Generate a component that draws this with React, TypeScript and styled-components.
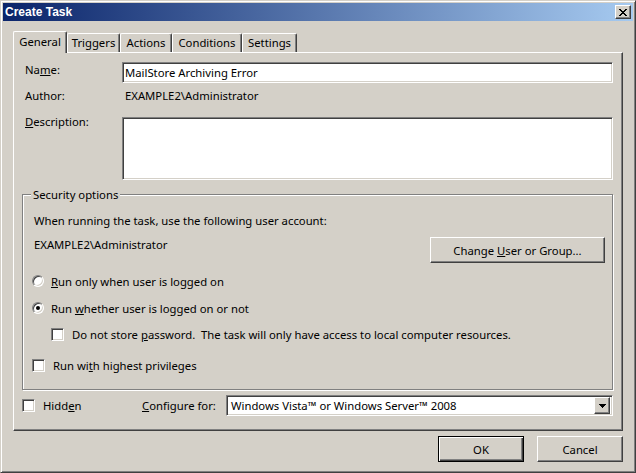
import React from 'react';
import styled, { createGlobalStyle, css } from 'styled-components';

const face = '#d4d0c8';
const shadow = '#808080';
const dark = '#404040';

const GlobalStyle = createGlobalStyle`
  html, body {
    margin: 0;
    padding: 0;
    background: ${face};
  }
  body {
    font-family: 'Noto Sans', 'Open Sans', sans-serif;
    font-size: 11.3px;
    color: #000;
  }
  * {
    box-sizing: border-box;
  }
`;

const raised = css`
  background: ${face};
  border: 1px solid;
  border-color: #fff ${dark} ${dark} #fff;
  box-shadow: inset -1px -1px 0 ${shadow};
`;

const sunken = css`
  background: #fff;
  border: 1px solid;
  border-color: ${shadow} #fff #fff ${shadow};
  box-shadow: inset 1px 1px 0 ${dark}, inset -1px -1px 0 ${face};
`;

const Window = styled.div`
  width: 636px;
  height: 473px;
  display: flex;
  flex-direction: column;
  background: ${face};
  padding: 2px;
  border: 1px solid;
  border-color: ${face} ${dark} ${dark} ${face};
  box-shadow: inset 1px 1px 0 #fff, inset -1px -1px 0 ${shadow};
`;

const TitleBar = styled.div`
  height: 18px;
  flex: none;
  display: flex;
  align-items: center;
  justify-content: space-between;
  padding: 0 2px;
  background: linear-gradient(to right, #0a246a, #a6caf0);
`;

const Title = styled.span`
  font-family: 'Liberation Sans', Arial, sans-serif;
  font-weight: bold;
  font-size: 12px;
  color: #fff;
`;

const CloseButton = styled.div`
  ${raised};
  width: 16px;
  height: 14px;
  display: flex;
  align-items: center;
  justify-content: center;
`;

const Body = styled.div`
  flex: 1;
  display: flex;
  flex-direction: column;
  padding: 10px 10px 8px;
`;

const TabStrip = styled.div`
  height: 21px;
  flex: none;
  display: flex;
  align-items: flex-end;
`;

const Tab = styled.div<{ $active?: boolean; $w: number }>`
  width: ${(p) => p.$w}px;
  height: ${(p) => (p.$active ? 22 : 19)}px;
  margin-bottom: ${(p) => (p.$active ? -1 : 0)}px;
  position: relative;
  z-index: ${(p) => (p.$active ? 1 : 0)};
  background: ${face};
  border-top: 1px solid #fff;
  border-left: 1px solid #fff;
  border-right: 1px solid ${dark};
  box-shadow: inset -1px 0 0 ${shadow};
  border-radius: 2px 2px 0 0;
  display: flex;
  justify-content: center;
  padding-top: ${(p) => (p.$active ? 2 : 1)}px;
  line-height: 15px;
`;

const Panel = styled.div`
  flex: 1;
  display: flex;
  flex-direction: column;
  border: 1px solid;
  border-color: #fff ${dark} ${dark} #fff;
  box-shadow: inset -1px -1px 0 ${shadow};
  padding: 9px 9px 0 8px;
`;

const FormRow = styled.div<{ $top?: number }>`
  display: grid;
  grid-template-columns: 100px 1fr;
  margin-top: ${(p) => p.$top ?? 0}px;
  line-height: 15px;
`;

const FieldLabel = styled.div`
  padding-left: 3px;
`;

const StaticValue = styled.div`
  padding-left: 3px;
`;

const TextField = styled.div<{ $h: number; $top?: number }>`
  ${sunken};
  height: ${(p) => p.$h}px;
  margin-top: ${(p) => p.$top ?? 0}px;
  padding: 2px 3px 0 2px;
  line-height: 15px;
`;

const GroupBox = styled.fieldset`
  margin: 7px 0 0;
  padding: 0 7px 16px 9px;
  border: 1px solid ${shadow};
  box-shadow: inset 1px 1px 0 #fff, 1px 1px 0 #fff;
  line-height: 15px;
`;

const Legend = styled.legend`
  margin-left: -1px;
  padding: 0 2px;
  background: ${face};
`;

const TextLine = styled.div<{ $top: number }>`
  margin-top: ${(p) => p.$top}px;
  padding-left: 2px;
`;

const AccountRow = styled.div`
  display: flex;
  justify-content: space-between;
  align-items: flex-start;
  margin-top: 9px;
  padding-left: 2px;
  line-height: 15px;
`;

const PushButton = styled.div<{ $w: number; $default?: boolean }>`
  ${raised};
  width: ${(p) => p.$w}px;
  height: 26px;
  display: flex;
  align-items: center;
  justify-content: center;
  ${(p) =>
    p.$default &&
    css`
      border-color: #000;
      box-shadow: inset 1px 1px 0 #fff, inset -1px -1px 0 ${dark}, inset -2px -2px 0 ${shadow};
    `}
`;

const OptionRow = styled.label<{ $top: number; $indent?: number }>`
  display: flex;
  align-items: center;
  height: 16px;
  margin-top: ${(p) => p.$top}px;
  padding-left: ${(p) => p.$indent ?? 0}px;
  gap: 7px;
`;

const Radio = styled.span<{ $checked?: boolean }>`
  width: 12px;
  height: 12px;
  flex: none;
  border-radius: 50%;
  border: 1px solid;
  border-color: ${shadow} #fff #fff ${shadow};
  box-shadow: inset 1px 1px 0 ${dark}, inset -1px -1px 0 ${face};
  background: #fff;
  display: flex;
  align-items: center;
  justify-content: center;
  &::after {
    content: '';
    width: 4px;
    height: 4px;
    border-radius: 50%;
    background: ${(p) => (p.$checked ? '#000' : 'transparent')};
  }
`;

const Check = styled.span`
  ${sunken};
  width: 13px;
  height: 13px;
  flex: none;
  margin-right: 1px;
`;

const BottomRow = styled.div`
  display: flex;
  align-items: center;
  margin-top: 5px;
`;

const HiddenOption = styled.label`
  width: 120px;
  display: flex;
  align-items: center;
  gap: 7px;
`;

const ConfigureLabel = styled.span`
  width: 84px;
`;

const Select = styled.div`
  ${sunken};
  flex: 1;
  height: 21px;
  display: flex;
  align-items: center;
  justify-content: space-between;
  padding: 0 2px 0 4px;
`;

const DropButton = styled.div`
  ${raised};
  width: 16px;
  height: 17px;
  display: flex;
  align-items: center;
  justify-content: center;
`;

const ButtonRow = styled.div`
  display: flex;
  justify-content: flex-end;
  gap: 13px;
  margin-top: 5px;
`;

const tabs = [
  { name: 'General', w: 54 },
  { name: 'Triggers', w: 53 },
  { name: 'Actions', w: 52 },
  { name: 'Conditions', w: 70 },
  { name: 'Settings', w: 55 },
];

export default function App() {
  return (
    <>
      <GlobalStyle />
      <Window>
        <TitleBar>
          <Title>Create Task</Title>
          <CloseButton>
            <svg width="8" height="7" viewBox="0 0 8 7" shapeRendering="crispEdges">
              <path
                d="M0 0h2v1H0zM6 0h2v1H6zM1 1h2v1H1zM5 1h2v1H5zM2 2h4v1H2zM3 3h2v1H3zM2 4h4v1H2zM1 5h2v1H1zM5 5h2v1H5zM0 6h2v1H0zM6 6h2v1H6z"
                fill="#000"
              />
            </svg>
          </CloseButton>
        </TitleBar>
        <Body>
          <TabStrip>
            {tabs.map((t) => (
              <Tab key={t.name} $w={t.w} $active={t.name === 'General'}>
                {t.name}
              </Tab>
            ))}
          </TabStrip>
          <Panel>
            <FormRow>
              <FieldLabel>
                Na<u>m</u>e:
              </FieldLabel>
              <TextField $h={21}>MailStore Archiving Error</TextField>
            </FormRow>
            <FormRow $top={5}>
              <FieldLabel>Author:</FieldLabel>
              <StaticValue>EXAMPLE2\Administrator</StaticValue>
            </FormRow>
            <FormRow $top={11}>
              <FieldLabel>
                <u>D</u>escription:
              </FieldLabel>
              <TextField $h={63} $top={3} />
            </FormRow>

            <GroupBox>
              <Legend>Security options</Legend>
              <TextLine $top={11}>When running the task, use the following user account:</TextLine>
              <AccountRow>
                <span>EXAMPLE2\Administrator</span>
                <PushButton $w={175}>
                  <span>
                    Change <u>U</u>ser or Group...
                  </span>
                </PushButton>
              </AccountRow>
              <OptionRow $top={10}>
                <Radio />
                <span>
                  <u>R</u>un only when user is logged on
                </span>
              </OptionRow>
              <OptionRow $top={11}>
                <Radio $checked />
                <span>
                  Run <u>w</u>hether user is logged on or not
                </span>
              </OptionRow>
              <OptionRow $top={10} $indent={19}>
                <Check />
                <span>
                  Do not store <u>p</u>assword.&nbsp; The task will only have access to local computer resources.
                </span>
              </OptionRow>
              <OptionRow $top={15}>
                <Check />
                <span>
                  Run wi<u>t</u>h highest privileges
                </span>
              </OptionRow>
            </GroupBox>

            <BottomRow>
              <HiddenOption>
                <Check />
                <span>
                  Hidd<u>e</u>n
                </span>
              </HiddenOption>
              <ConfigureLabel>
                <u>C</u>onfigure for:
              </ConfigureLabel>
              <Select>
                <span>Windows Vista™ or Windows Server™ 2008</span>
                <DropButton>
                  <svg width="7" height="4" viewBox="0 0 7 4" shapeRendering="crispEdges">
                    <path d="M0 0h7v1H0zM1 1h5v1H1zM2 2h3v1H2zM3 3h1v1H3z" fill="#000" />
                  </svg>
                </DropButton>
              </Select>
            </BottomRow>
          </Panel>
          <ButtonRow>
            <PushButton $w={86} $default>
              OK
            </PushButton>
            <PushButton $w={86}>Cancel</PushButton>
          </ButtonRow>
        </Body>
      </Window>
    </>
  );
}
